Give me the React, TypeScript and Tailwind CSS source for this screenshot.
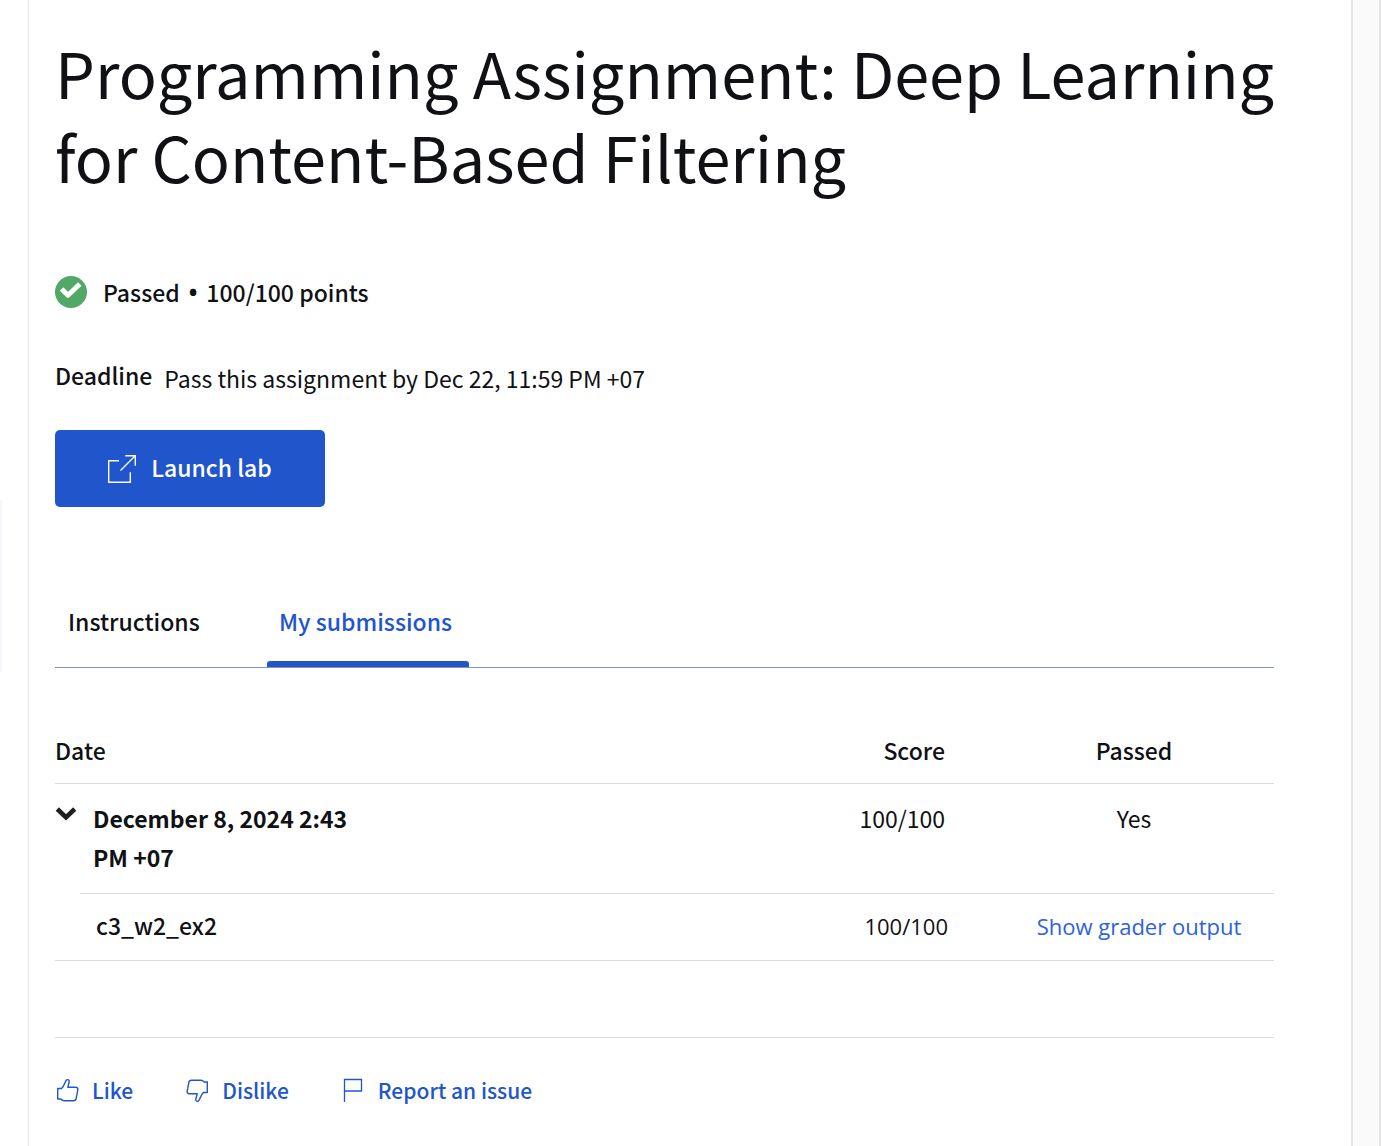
import { useState } from "react";

function PassedIcon() {
  return (
    <svg className="size-8 shrink-0" viewBox="0 0 32 32" aria-hidden="true">
      <circle cx="16" cy="16" r="16" fill="#52a866" />
      <path d="M6.600 13 13 19.300 24.800 8" fill="none" stroke="#fff" strokeWidth="5" strokeLinejoin="round" />
    </svg>
  );
}

function LaunchIcon() {
  return (
    <svg className="size-7 shrink-0" viewBox="0 0 28 28" fill="none" stroke="currentColor" strokeWidth="1.4" aria-hidden="true">
      <path d="M11 5.700H.7v21.600h21.600V17.200" />
      <path d="M12.500 15.600 27 1M17.300.7h10v10" />
    </svg>
  );
}

function ThumbIcon() {
  return (
    <svg className="size-6 shrink-0" viewBox="0 0 24 24" fill="none" stroke="currentColor" strokeWidth="1.4" strokeLinejoin="round" aria-hidden="true">
      <path d="M2.700 21V10.500H6.500L8.200 8.500 11 2.600Q11.700 1.500 13 1.700 14.500 2.200 14.200 4L12.800 9.300H20.600Q23.200 9.400 22.800 11.800L21.200 20.400Q20.800 22.700 18.500 22.700H9Q7.400 22.700 5.800 21Z" />
    </svg>
  );
}

function DislikeIcon() {
  return (
    <svg className="size-6 shrink-0" viewBox="0 0 24 24" fill="none" stroke="currentColor" strokeWidth="1.4" strokeLinejoin="round" aria-hidden="true">
      <path d="M22.300 4V14.500H18.500L16.800 16.500 14 22.400Q13.300 23.500 12 23.300 10.500 22.800 10.800 21L12.200 15.700H4.400Q1.800 15.600 2.200 13.200L3.800 4.600Q4.200 2.300 6.500 2.300H16Q17.600 2.300 19.200 4Z" />
    </svg>
  );
}

function FlagIcon() {
  return (
    <svg className="size-6 shrink-0" viewBox="0 0 24 24" fill="none" stroke="currentColor" strokeWidth="1.3" aria-hidden="true">
      <path d="M3.500 24V1.500h17v11.500h-17" />
    </svg>
  );
}

export default function App() {
  const [tab, setTab] = useState("submissions");

  return (
    <div className="flex min-h-screen bg-white font-['Noto_Sans_CJK_SC',sans-serif] text-[23px] leading-9 text-[#0f1114]">
      <div className="w-[29px] shrink-0 border-r border-[#e5e7f3]">
        <div className="mt-[500px] h-[172px] w-[2px] bg-[#f5f5fb]" />
      </div>

      <main className="min-w-0 flex-1 pt-[30px] pr-[77px] pl-[26px]">
        <h1 className="-mr-6 text-[63px] leading-[84px]">
          Programming Assignment: Deep Learning for Content-Based Filtering
        </h1>

        <div className="mt-[76px] flex items-center gap-4 font-medium">
          <PassedIcon />
          <p className="flex gap-[9px]">
            <span>Passed</span>
            <span className="font-['Open_Sans',sans-serif] font-bold">•</span>
            <span>100/100 points</span>
          </p>
        </div>

        <div className="mt-[47px] flex gap-3">
          <span className="font-medium">Deadline</span>
          <span className="pt-[3px]">Pass this assignment by Dec 22, 11:59 PM +07</span>
        </div>

        <button type="button" className="mt-[34px] flex h-[77px] w-[270px] items-center justify-center gap-[15px] rounded-[5px] bg-[#2055cc] font-medium text-white">
          <LaunchIcon />
          <span className="pb-[3px]">Launch lab</span>
        </button>

        <div role="tablist" className="mt-24 flex h-[65px] gap-[52px] border-b border-[#8495b0]">
          <button type="button" role="tab" aria-selected={tab === "instructions"} onClick={() => setTab("instructions")} className="w-40 px-[13px] pb-7 text-left font-medium">
            Instructions
          </button>
          <button type="button" role="tab" aria-selected={tab === "submissions"} onClick={() => setTab("submissions")} className="relative w-[202px] px-3 pb-7 text-left font-medium text-[#2055cc]">
            My submissions
            <span className="absolute inset-x-0 bottom-0 h-[6px] rounded-t-[3px] bg-[#2055cc]" />
          </button>
        </div>

        <table className="mt-[63px] w-full table-fixed border-separate border-spacing-0 leading-[39px]">
          <colgroup>
            <col className="w-[25px]" />
            <col />
            <col className="w-[200px]" />
            <col className="w-[280px]" />
          </colgroup>
          <thead>
            <tr className="h-[53px] align-top">
              <th scope="col" colSpan={2} className="border-b border-[#dadcde] text-left font-medium">Date</th>
              <th scope="col" className="border-b border-[#dadcde] pr-[49px] text-right font-medium">Score</th>
              <th scope="col" className="border-b border-[#dadcde] text-center font-medium">Passed</th>
            </tr>
          </thead>
          <tbody>
            <tr className="h-[110px] align-top">
              <td className="pt-[23px]">
                <button type="button" aria-label="Collapse submission" className="block">
                  <svg className="h-[14px] w-[22px]" viewBox="0 0 22 14" aria-hidden="true">
                    <path d="M2.300 2 11 10.300 19.700 2" fill="none" stroke="#1f1f1f" strokeWidth="4.600" />
                  </svg>
                </button>
              </td>
              <td className="border-b border-[#dadcde] pt-[15px] pl-[13px] font-bold">
                <div className="max-w-[280px]">December 8, 2024 2:43 PM +07</div>
              </td>
              <td className="border-b border-[#dadcde] pt-[15px] pr-[49px] text-right">100/100</td>
              <td className="border-b border-[#dadcde] pt-[15px] text-center">Yes</td>
            </tr>
            <tr className="h-[67px] align-top">
              <td className="border-b border-[#dadcde]" />
              <td className="border-b border-[#dadcde] pt-3 pl-4 font-medium">c3_w2_ex2</td>
              <td className="border-b border-[#dadcde] pt-[13px] pr-[46px] text-right font-['Open_Sans',sans-serif] text-[22px]">100/100</td>
              <td className="border-b border-[#dadcde] pt-[13px] pl-[10px] text-center font-['Open_Sans',sans-serif] text-[22px]">
                <a href="#grader-output" className="text-[#2d62dd]">Show grader output</a>
              </td>
            </tr>
          </tbody>
        </table>

        <footer className="mt-[76px] flex gap-[52px] border-t border-[#dadcde] pt-9 text-[21px] leading-8 font-medium text-[#2055cc]">
          <button type="button" className="flex items-center gap-[13px]">
            <ThumbIcon />
            Like
          </button>
          <button type="button" className="flex items-center gap-[13px]">
            <DislikeIcon />
            Dislike
          </button>
          <button type="button" className="flex items-center gap-[13px]">
            <FlagIcon />
            Report an issue
          </button>
        </footer>
      </main>

      <aside className="w-[30px] shrink-0 border-r-2 border-l-2 border-[#e6e6e6] bg-[#fafafa]" />
    </div>
  );
}
